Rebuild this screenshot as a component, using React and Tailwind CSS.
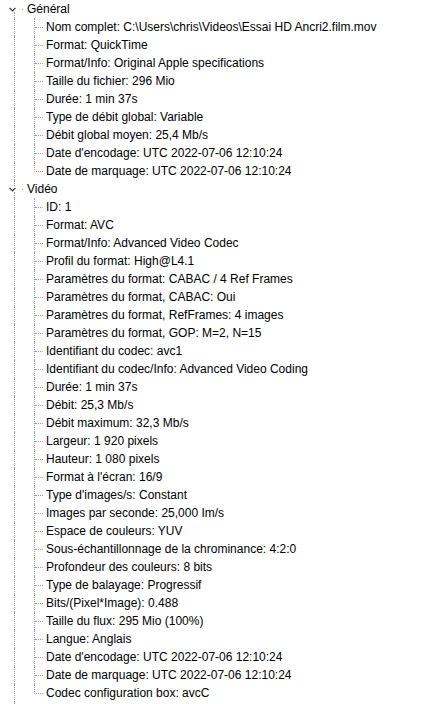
const SECTIONS = [
  {
    title: "Général",
    items: [
      "Nom complet: C:\\Users\\chris\\Videos\\Essai HD Ancri2.film.mov",
      "Format: QuickTime",
      "Format/Info: Original Apple specifications",
      "Taille du fichier: 296 Mio",
      "Durée: 1 min 37s",
      "Type de débit global: Variable",
      "Débit global moyen: 25,4 Mb/s",
      "Date d'encodage: UTC 2022-07-06 12:10:24",
      "Date de marquage: UTC 2022-07-06 12:10:24",
    ],
  },
  {
    title: "Vidéo",
    items: [
      "ID: 1",
      "Format: AVC",
      "Format/Info: Advanced Video Codec",
      "Profil du format: High@L4.1",
      "Paramètres du format: CABAC / 4 Ref Frames",
      "Paramètres du format, CABAC: Oui",
      "Paramètres du format, RefFrames: 4 images",
      "Paramètres du format, GOP: M=2, N=15",
      "Identifiant du codec: avc1",
      "Identifiant du codec/Info: Advanced Video Coding",
      "Durée: 1 min 37s",
      "Débit: 25,3 Mb/s",
      "Débit maximum: 32,3 Mb/s",
      "Largeur: 1 920 pixels",
      "Hauteur: 1 080 pixels",
      "Format à l'écran: 16/9",
      "Type d'images/s: Constant",
      "Images par seconde: 25,000 Im/s",
      "Espace de couleurs: YUV",
      "Sous-échantillonnage de la chrominance: 4:2:0",
      "Profondeur des couleurs: 8 bits",
      "Type de balayage: Progressif",
      "Bits/(Pixel*Image): 0.488",
      "Taille du flux: 295 Mio (100%)",
      "Langue: Anglais",
      "Date d'encodage: UTC 2022-07-06 12:10:24",
      "Date de marquage: UTC 2022-07-06 12:10:24",
      "Codec configuration box: avcC",
    ],
  },
];

const LINE = "border-dotted border-[#a0a0a0]";

function Chevron() {
  return (
    <svg width="7" height="5" viewBox="0 0 7 5" className="block">
      <path d="M0.6 0.8 L3.5 3.8 L6.4 0.8" fill="none" stroke="#2b2b2b" strokeWidth="1.2" />
    </svg>
  );
}

function RootRow({ title, first }) {
  return (
    <div className="flex h-[18px] items-stretch">
      {/* expander column */}
      <div className="flex w-[20px] flex-col pl-[14px]">
        <div className={`h-[6px] ${first ? "" : `border-l ${LINE}`}`} />
        <div className="-ml-[5px] flex h-[6px] items-center">
          <Chevron />
        </div>
        <div className={`flex-1 border-l ${LINE}`} />
      </div>
      <div className="flex w-[6px] flex-col pl-[2px]">
        <div className="h-[9px]" />
        <div className="h-px w-px bg-[#a0a0a0]" />
      </div>
      <span className="flex items-center pl-[1px] leading-none">{title}</span>
    </div>
  );
}

function LeafRow({ text, last }) {
  return (
    <div className="flex h-[18px] items-stretch">
      <div className="w-[20px] pl-[14px]">
        <div className={`h-full border-l ${LINE}`} />
      </div>
      <div className="w-[25px] pl-[14px]">
        <div className={`h-full w-[9px] ${last ? "" : `border-l ${LINE}`}`}>
          <div
            className={`h-[10px] border-b ${LINE} ${last ? `border-l ${LINE}` : ""}`}
          />
        </div>
      </div>
      <span className="flex items-center pl-[1px] leading-none whitespace-nowrap">{text}</span>
    </div>
  );
}

export default function App() {
  return (
    <div className="h-[704px] w-[429px] overflow-hidden bg-white font-['Liberation_Sans',Arial,sans-serif] text-[12px] text-black">
      {SECTIONS.map((s, si) => (
        <div key={s.title}>
          <RootRow title={s.title} first={si === 0} />
          {s.items.map((t, i) => (
            <LeafRow key={t + i} text={t} last={i === s.items.length - 1} />
          ))}
        </div>
      ))}
      {/* root line continues toward the next (cut off) section */}
      <div className="h-[40px] w-[20px] pl-[14px]">
        <div className={`h-full border-l ${LINE}`} />
      </div>
    </div>
  );
}
